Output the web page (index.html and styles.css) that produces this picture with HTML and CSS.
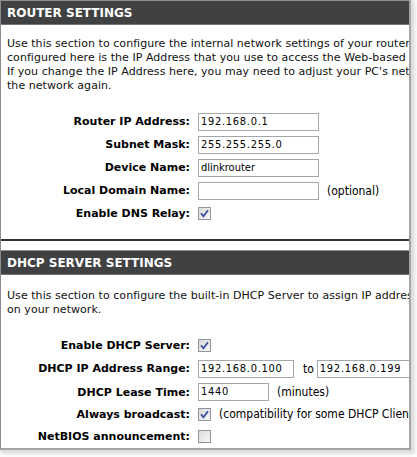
FILE: index.html
```html
<!DOCTYPE html>
<html>
<head>
<meta charset="utf-8">
<link rel="stylesheet" href="styles.css">
</head>
<body>
<div class="panel">
  <section class="box">
    <h2 class="box-title">ROUTER SETTINGS</h2>
    <p class="intro">Use this section to configure the internal network settings of your router.<br>configured here is the IP Address that you use to access the Web-based<br>If you change the IP Address here, you may need to adjust your PC's network<br>the network again.</p>
    <div class="form form-router">
      <div class="row r23"><span class="lbl">Router IP Address:</span><span class="ctl"><span class="field w121">192.168.0.1</span></span></div>
      <div class="row r23"><span class="lbl">Subnet Mask:</span><span class="ctl"><span class="field w121">255.255.255.0</span></span></div>
      <div class="row r23"><span class="lbl">Device Name:</span><span class="ctl"><span class="field w121 plain">dlinkrouter</span></span></div>
      <div class="row r23"><span class="lbl">Local Domain Name:</span><span class="ctl"><span class="field w121"></span><span class="note">(optional)</span></span></div>
      <div class="row r23"><span class="lbl">Enable DNS Relay:</span><span class="ctl"><span class="cb"><svg viewBox="0 0 13 13" width="13" height="13"><path d="M3 6.2 L5.4 9.2 L10 3.2" fill="none" stroke="#3b4fa0" stroke-width="1.8"/></svg></span></span></div>
    </div>
  </section>
  <hr class="sep">
  <section class="box">
    <h2 class="box-title">DHCP SERVER SETTINGS</h2>
    <p class="intro intro-dhcp">Use this section to configure the built-in DHCP Server to assign IP addresses<br>on your network.</p>
    <div class="form form-dhcp">
      <div class="row r22"><span class="lbl">Enable DHCP Server:</span><span class="ctl"><span class="cb"><svg viewBox="0 0 13 13" width="13" height="13"><path d="M3 6.2 L5.4 9.2 L10 3.2" fill="none" stroke="#3b4fa0" stroke-width="1.8"/></svg></span></span></div>
      <div class="row r25"><span class="lbl">DHCP IP Address Range:</span><span class="ctl"><span class="field w96">192.168.0.100</span><span class="to">to</span><span class="field w96">192.168.0.199</span></span></div>
      <div class="row r22"><span class="lbl">DHCP Lease Time:</span><span class="ctl"><span class="field w71">1440</span><span class="note">(minutes)</span></span></div>
      <div class="row r22"><span class="lbl">Always broadcast:</span><span class="ctl"><span class="cb"><svg viewBox="0 0 13 13" width="13" height="13"><path d="M3 6.2 L5.4 9.2 L10 3.2" fill="none" stroke="#3b4fa0" stroke-width="1.8"/></svg></span><span class="note">(compatibility for some DHCP Clients)</span></span></div>
      <div class="row r23"><span class="lbl">NetBIOS announcement:</span><span class="ctl"><span class="cb"></span></span></div>
    </div>
  </section>
</div>
</body>
</html>
```
FILE: styles.css
```css
html, body {
  margin: 0;
  padding: 0;
  background: #ffffff;
}
body {
  font-family: "DejaVu Sans", sans-serif;
  font-size: 11px;
  color: #000;
  width: 417px;
  height: 457px;
  overflow: hidden;
}
.panel {
  width: 408px;
  height: 448px;
  border-left: 1px solid #8c8c8c;
  border-right: 2px solid #a4a4a4;
  border-bottom: 2px solid #a4a4a4;
  overflow: hidden;
  box-shadow: 2px 2px 4px 2px #dcdcdc;
}
.box-title {
  margin: 0;
  height: 23px;
  background: #3f4142;
  color: #fff;
  font-size: 12px;
  font-weight: bold;
  line-height: 24px;
  padding-left: 6px;
  border-top: 1px solid #8e9091;
  border-bottom: 1px solid #717374;
}
.intro {
  margin: 12px 0 0 6px;
  line-height: 14px;
  white-space: nowrap;
  letter-spacing: 0.05px;
  color: #111;
}
.intro-dhcp { margin-top: 14px; }
.form {
  display: flex;
  flex-direction: column;
}
.form-router { margin-top: 17px; }
.form-dhcp { margin-top: 17px; }
.row {
  display: flex;
  align-items: center;
  gap: 8px;
}
.r22 { height: 22px; }
.r23 { height: 23px; }
.r25 { height: 25px; }
.lbl {
  width: 189px;
  flex: none;
  text-align: right;
  font-weight: bold;
  white-space: nowrap;
}
.ctl {
  display: flex;
  align-items: center;
  white-space: nowrap;
  font-family: "DejaVu Sans Condensed", "DejaVu Sans", sans-serif;
  font-stretch: condensed;
}
.field {
  box-sizing: border-box;
  height: 18px;
  border: 1px solid #a3a8ae;
  background: #fff;
  padding-left: 2px;
  line-height: 16px;
  font-size: 11px;
  letter-spacing: 0.7px;
  flex: none;
}
.field.plain { letter-spacing: 0; }
.w121 { width: 121px; }
.w96 { width: 96px; }
.w71 { width: 71px; }
.note {
  margin-left: 8px;
  font-size: 12px;
}
.to {
  margin: 0 3px 0 9px;
  font-size: 12px;
}
.cb {
  box-sizing: border-box;
  width: 13px;
  height: 13px;
  border: 1px solid #8e959e;
  background: linear-gradient(135deg, #dadada, #f7f7f7);
  display: inline-flex;
  flex: none;
}
.cb svg { display: block; margin: -1px; }
.sep {
  margin: 14px 0 9px 0;
  border: 0;
  border-top: 2px solid #333;
  height: 0;
}
```
